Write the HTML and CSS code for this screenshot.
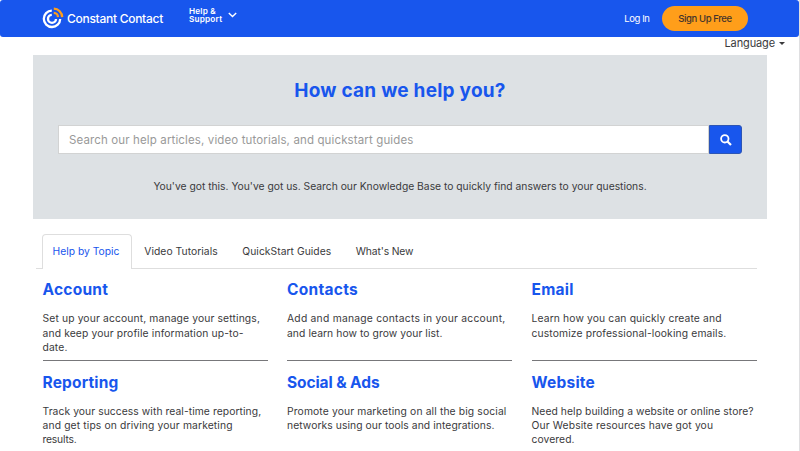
FILE: index.html
```
<!DOCTYPE html>
<html lang="en">
<head>
<meta charset="utf-8">
<title>Constant Contact Help Center</title>
<link rel="stylesheet" href="styles.css">
</head>
<body>
<div class="page">
  <header class="header">
    <a class="brand">
      <svg class="brand-mark" viewBox="0 0 22 22" fill="none">
        <path d="M9.8 3.6A8.2 8.2 0 1 0 18.2 12" stroke="#fff" stroke-width="2.3"/>
        <path d="M9.8 7.9A4 4 0 1 0 14 12" stroke="#fff" stroke-width="2.4"/>
        <path d="M11.8 1.7A8.6 8.6 0 0 1 20.2 10.1" stroke="#ff9e1a" stroke-width="2.3"/>
        <path d="M11.8 5.9A4.3 4.3 0 0 1 16 10.1" stroke="#ff9e1a" stroke-width="2.3"/>
      </svg>
      <span class="brand-name">Constant Contact</span>
    </a>
    <nav class="menu">
      <span class="menu-label"><span>Help &amp;</span><span>Support</span></span>
      <svg class="chevron" viewBox="0 0 9 6" fill="none"><path d="M.8 .9L4.5 4.5L8.2 .9" stroke="#fff" stroke-width="1.4"/></svg>
    </nav>
    <a class="login">Log In</a>
    <a class="signup">Sign Up Free</a>
  </header>

  <div class="language">Language<i class="caret"></i></div>

  <section class="hero">
    <h1>How can we help you?</h1>
    <form class="search">
      <div class="search-field">Search our help articles, video tutorials, and quickstart guides</div>
      <div class="search-button">
        <svg viewBox="0 0 12 12" fill="none" stroke="#fff"><circle cx="4.8" cy="4.8" r="3.7" stroke-width="1.8"/><path d="M7.5 7.5L11 11" stroke-width="2.2"/></svg>
      </div>
    </form>
    <p>You've got this. You've got us. Search our Knowledge Base to quickly find answers to your questions.</p>
  </section>

  <div class="tabs">
    <a class="tab active">Help by Topic</a>
    <a class="tab video">Video Tutorials</a>
    <a class="tab quick">QuickStart Guides</a>
    <a class="tab news">What's New</a>
  </div>

  <main class="topics">
    <article class="topic">
      <h2 class="account">Account</h2>
      <p>Set up your account, manage your settings,<br>and keep your profile information up-to-<br>date.</p>
    </article>
    <article class="topic">
      <h2 class="contacts">Contacts</h2>
      <p><span class="wide">Add and manage contacts in your account,</span><br><span class="snug">and learn how to grow your list.</span></p>
    </article>
    <article class="topic">
      <h2 class="email">Email</h2>
      <p>Learn how you can quickly create and<br>customize professional-looking emails.</p>
    </article>
    <article class="topic">
      <h2 class="reporting">Reporting</h2>
      <p><span class="snug">Track your success with real-time reporting,</span><br>and get tips on driving your marketing<br><span class="tight">results.</span></p>
    </article>
    <article class="topic">
      <h2 class="social">Social &amp; Ads</h2>
      <p>Promote your marketing on all the big social<br><span class="snug">networks using our tools and integrations.</span></p>
    </article>
    <article class="topic">
      <h2 class="website">Website</h2>
      <p><span class="snug">Need help building a website or online store?</span><br>Our Website resources have got you<br><span class="snug">covered.</span></p>
    </article>
  </main>
</div>
</body>
</html>
```
FILE: styles.css
```
* { box-sizing: border-box; }

body {
  margin: 0;
  overflow: hidden;
  background: #fff;
  color: #3a3a3c;
  font: 10.3px/14.4px Inter, sans-serif;
}

h1, h2, p { margin: 0; }

.page {
  height: 451px;
  overflow: hidden;
  border-right: 1px solid #dfdfe1;
}

.header {
  display: flex;
  align-items: center;
  height: 37px;
  padding: 0 51px 0 42px;
  border-radius: 3px;
  background: #1856ed;
  color: #fff;
  white-space: nowrap;
}

.brand { display: flex; align-items: center; width: 147px; }
.brand-mark { width: 22px; height: 22px; margin: -1px 3px 0 0; }
.brand-name { padding-top: 1px; font-size: 12px; font-weight: 500; letter-spacing: -0.28px; }

.menu { display: flex; align-items: center; margin-top: -5px; }
.menu-label {
  display: flex;
  flex-direction: column;
  width: 39px;
  font-size: 8.2px;
  font-weight: 600;
  line-height: 7.8px;
  letter-spacing: 0.2px;
}
.chevron { width: 9px; height: 6px; margin-top: -2px; }

.login { margin: 2px 0 0 auto; font-size: 9.5px; letter-spacing: -0.42px; }

.signup {
  width: 86px;
  height: 25px;
  margin-left: 12.5px;
  border-radius: 13px;
  background: #ff9e1a;
  color: #44342c;
  font-size: 9.5px;
  font-weight: 500;
  line-height: 25px;
  letter-spacing: -0.38px;
  text-align: center;
}

.language {
  display: flex;
  align-items: center;
  justify-content: flex-end;
  height: 12px;
  margin-bottom: 5.5px;
  padding-right: 14px;
  font-size: 11px;
  line-height: 12px;
  letter-spacing: -0.12px;
}

.caret {
  margin: 1px 0 0 4px;
  border-top: 3px solid #3a3a3c;
  border-right: 3px solid transparent;
  border-left: 3px solid transparent;
}

.hero {
  width: 734px;
  height: 164px;
  margin-left: 33px;
  padding: 26px 25px 0;
  background: #dde1e4;
  text-align: center;
}

.hero h1 {
  color: #1856ed;
  font-size: 19px;
  line-height: 20px;
  letter-spacing: 0.24px;
}

.search { display: flex; height: 29px; margin: 24.5px 0 25px; }

.search-field {
  flex: 1;
  padding-left: 10px;
  border: 1px solid #d2d3d3;
  background: #fff;
  color: #999;
  font-size: 11.5px;
  line-height: 28px;
  letter-spacing: 0.13px;
  text-align: left;
}

.search-button {
  display: flex;
  align-items: center;
  justify-content: center;
  width: 33px;
  border: 1px solid #2c55b5;
  border-radius: 0 3px 3px 0;
  background: #1856ed;
}

.search-button svg { width: 12px; height: 12px; }

.tabs {
  display: flex;
  width: 721px;
  height: 35px;
  margin: 15px 0 0 36px;
  padding-left: 6px;
  border-bottom: 1px solid #dedede;
}

.tab { height: 35px; padding: 0 12.3px; line-height: 34px; white-space: nowrap; letter-spacing: 0.05px; }

.tab.active {
  width: 90px;
  padding: 0 0 0 9.5px;
  border: 1px solid #dedede;
  border-bottom: 0;
  border-radius: 4px 4px 0 0;
  background: #fff;
  color: #1856ed;
  line-height: 32px;
  letter-spacing: 0.01px;
}

.tab.news { letter-spacing: -0.13px; }

.topics {
  display: grid;
  grid-template-columns: repeat(3, 225px);
  grid-template-rows: 92.5px 92.5px;
  column-gap: 19.5px;
  padding-left: 42.5px;
}

.topic {
  padding-top: 11px;
  border-bottom: 1px solid #77777a;
  white-space: nowrap;
}

.topic:nth-child(n + 4) { padding-top: 11.6px; }

.topic h2 {
  margin-bottom: 11.6px;
  color: #1856ed;
  font-size: 15.5px;
  line-height: 20px;
}

.topic:nth-child(n + 4) h2 { margin-bottom: 11px; }

.topic p { letter-spacing: 0.14px; }

.account, .email, .website { letter-spacing: 0.23px; }
.contacts { letter-spacing: 0.28px; }
.reporting { letter-spacing: 0.17px; }
.social { letter-spacing: -0.09px; }

.wide { letter-spacing: 0.245px; }
.snug { letter-spacing: 0.08px; }
.tight { letter-spacing: -0.19px; }
```
